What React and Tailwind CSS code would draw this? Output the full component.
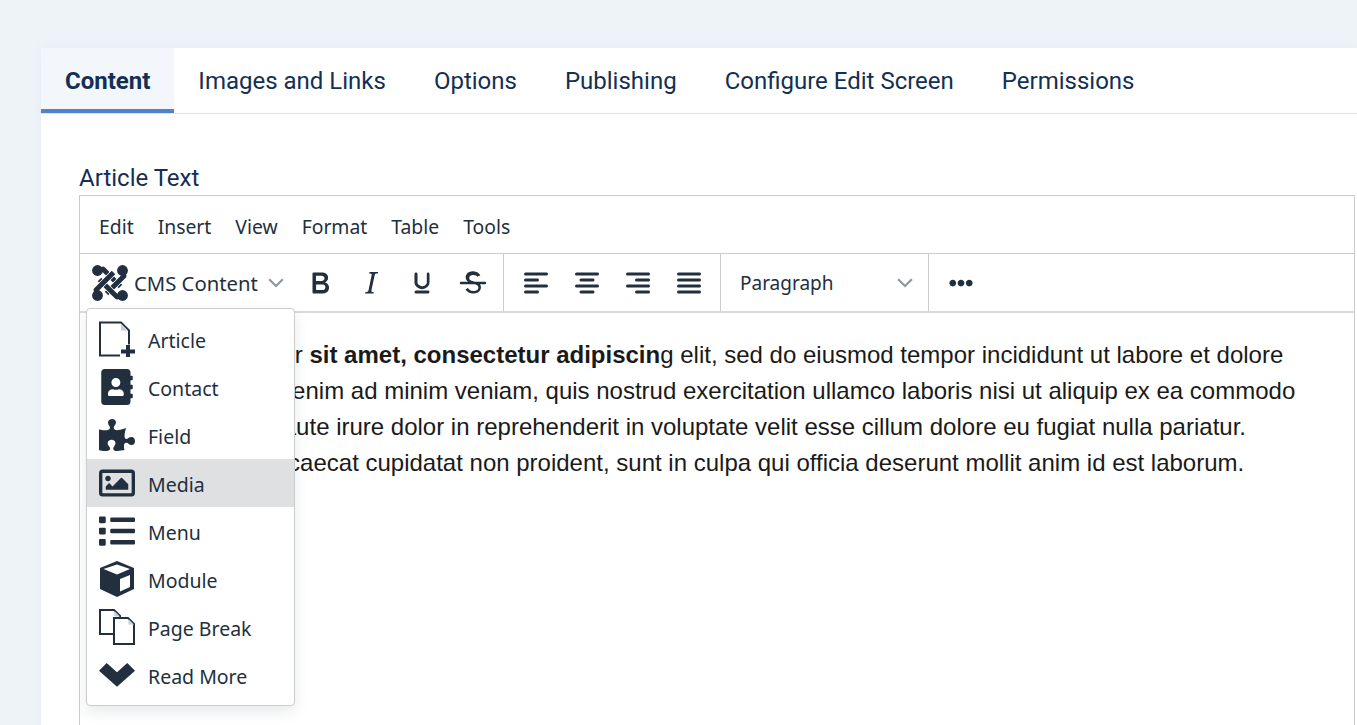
import React from "react";
import { FaAddressBook, FaPuzzlePiece, FaRegImage, FaList, FaEllipsisH } from "react-icons/fa";

const ui = { fontFamily: '"Noto Sans", sans-serif' };

function TI({ d }) {
  return (
    <svg viewBox="0 0 24 24" className="w-[36px] h-[36px] shrink-0" fill="#222f3e">
      <path d={d} />
    </svg>
  );
}

const paths = {
  bold: "M7.8 19c-.3 0-.5 0-.6-.2l-.2-.5V5.7c0-.2 0-.4.2-.5l.6-.2h5c1.5 0 2.7.3 3.5 1 .7.6 1.1 1.4 1.1 2.5a3 3 0 0 1-.6 1.9c-.4.6-1 1-1.6 1.2.4.1.9.3 1.3.6s.8.7 1 1.2c.4.4.5 1 .5 1.6 0 1.3-.4 2.3-1.3 3-.8.7-2.1 1-3.8 1H7.8zm5-8.3c.6 0 1.2-.1 1.6-.5.4-.3.6-.7.6-1.3 0-1.1-.8-1.7-2.3-1.7H9.3v3.5h3.5zm.5 6c.7 0 1.3-.1 1.7-.4.4-.4.6-.9.6-1.5s-.2-1-.7-1.4c-.4-.3-1-.4-2-.4H9.4v3.7h3.9z",
  italic: "m16.7 4.7-.1.9h-.3c-.6 0-1 0-1.4.3-.3.3-.4.6-.5 1.1l-2.1 9.8v.6c0 .5.4.8 1.4.8h.2l-.2.8H8l.2-.8h.2c1.1 0 1.8-.5 2-1.5l2-9.8.1-.5c0-.6-.4-.8-1.4-.8h-.3l.2-.9h5.8Z",
  underline: "M16 5c.6 0 1 .4 1 1v5.5a4 4 0 0 1-.4 1.8l-1 1.4a5.3 5.3 0 0 1-5.5 1 5 5 0 0 1-1.6-1c-.5-.4-.8-.9-1.1-1.4a4 4 0 0 1-.4-1.8V6c0-.6.4-1 1-1s1 .4 1 1v5.5c0 .3 0 .6.2 1l.6.7a3.3 3.3 0 0 0 5.2-.7c.2-.4.2-.7.2-1V6c0-.6.4-1 1-1ZM8 17h8c.6 0 1 .4 1 1s-.4 1-1 1H8a1 1 0 0 1 0-2Z",
  strike: "M15.6 8.5c-.5-.7-1-1.1-1.3-1.3-.6-.4-1.3-.6-2-.6-2.7 0-2.8 1.7-2.8 2.1 0 1.6 1.8 2 3.2 2.3 4.4.9 4.6 2.8 4.6 3.9 0 1.4-.7 4.1-5 4.1A6.2 6.2 0 0 1 7 16.4l1.5-1.1c.4.6 1.6 2 3.7 2 1.6 0 2.5-.4 3-1 .3-.4.4-.9.4-1.3 0-.8-.4-2-4-2.7-1-.2-2.2-.7-2.9-1.2-.7-.4-1.6-1.4-1.6-2.7 0-1.7 1.1-4.2 4.8-4.2 1.9 0 3.1.7 3.9 1.4.6.5 1 1 1.1 1.4l-1.8.5ZM4 11.2h16a.8.8 0 0 1 0 1.6H4a.8.8 0 0 1 0-1.6Z",
  left: "M5 5h14c.6 0 1 .4 1 1s-.4 1-1 1H5a1 1 0 1 1 0-2Zm0 4h8c.6 0 1 .4 1 1s-.4 1-1 1H5a1 1 0 1 1 0-2Zm0 8h8c.6 0 1 .4 1 1s-.4 1-1 1H5a1 1 0 0 1 0-2Zm0-4h14c.6 0 1 .4 1 1s-.4 1-1 1H5a1 1 0 0 1 0-2Z",
  center: "M5 5h14c.6 0 1 .4 1 1s-.4 1-1 1H5a1 1 0 1 1 0-2Zm3 4h8c.6 0 1 .4 1 1s-.4 1-1 1H8a1 1 0 1 1 0-2Zm0 8h8c.6 0 1 .4 1 1s-.4 1-1 1H8a1 1 0 0 1 0-2Zm-3-4h14c.6 0 1 .4 1 1s-.4 1-1 1H5a1 1 0 0 1 0-2Z",
  right: "M5 5h14c.6 0 1 .4 1 1s-.4 1-1 1H5a1 1 0 1 1 0-2Zm6 4h8c.6 0 1 .4 1 1s-.4 1-1 1h-8a1 1 0 0 1 0-2Zm0 8h8c.6 0 1 .4 1 1s-.4 1-1 1h-8a1 1 0 0 1 0-2Zm-6-4h14c.6 0 1 .4 1 1s-.4 1-1 1H5a1 1 0 0 1 0-2Z",
  justify: "M5 5h14c.6 0 1 .4 1 1s-.4 1-1 1H5a1 1 0 1 1 0-2Zm0 4h14c.6 0 1 .4 1 1s-.4 1-1 1H5a1 1 0 1 1 0-2Zm0 4h14c.6 0 1 .4 1 1s-.4 1-1 1H5a1 1 0 0 1 0-2Zm0 4h14c.6 0 1 .4 1 1s-.4 1-1 1H5a1 1 0 0 1 0-2Z",
};

function Chevron({ className }) {
  return (
    <svg viewBox="0 0 10 10" className={className} fill="none" stroke="#222f3e" strokeOpacity="0.5" strokeWidth="1.35">
      <path d="M0.7 2.6 5 6.9 9.3 2.6" />
    </svg>
  );
}

function JoomlaLogo() {
  const c = "#222f3e";
  const piece = (
    <>
      <path d="M13 6 26 19 30 23" fill="none" stroke="#fff" strokeWidth="6.600" />
      <path d="M7 7 12 5 26 19 29.500 22.500" fill="none" stroke={c} strokeWidth="5" strokeLinejoin="round" />
      <circle cx="6.500" cy="6.500" r="5.400" fill={c} />
    </>
  );
  return (
    <svg viewBox="0 0 38 38" className="w-[38px] h-[38px] shrink-0">
      <g>{piece}</g>
      <g transform="rotate(90 19 19)">{piece}</g>
      <g transform="rotate(180 19 19)">{piece}</g>
      <g transform="rotate(270 19 19)">{piece}</g>
    </svg>
  );
}

function ArticleIcon() {
  return (
    <svg viewBox="0 0 36 36" className="w-[36px] h-[36px] shrink-0" fill="none">
      <path d="M21 34.500H1V1.500h21l8 8v14" stroke="#222f3e" strokeWidth="2" />
      <path d="M22 2.500v7h7z" fill="#c9ced4" />
      <path d="M27 24h4v4.500h5v4h-5V36h-4v-3.500h-5v-4h5z" fill="#222f3e" />
    </svg>
  );
}

function PageBreakIcon() {
  return (
    <svg viewBox="0 0 36 36" className="w-[36px] h-[36px] shrink-0" fill="none" stroke="#222f3e" strokeWidth="2">
      <path d="M14 25H1V1h14l6 6v2" />
      <path d="M15.500 2v5.500H21z" fill="#c9ced4" stroke="none" />
      <path d="M15 35V9h14l6 6v20z" fill="#fff" />
      <path d="M29.500 10v5.500H35z" fill="#c9ced4" stroke="none" />
    </svg>
  );
}

function CubeIcon() {
  return (
    <svg viewBox="0 0 36 36" className="w-[36px] h-[36px] shrink-0">
      <path d="M18 0 35 7v21L18 36 1 28V7z" fill="#222f3e" />
      <path d="M4.500 8 18 3.500 31 8 18 13.500z" fill="#fff" />
      <path d="M21 18 31 14v12L21 30.500z" fill="#fff" />
    </svg>
  );
}

function ReadMoreIcon() {
  return (
    <svg viewBox="0 0 36 36" className="w-[36px] h-[36px] shrink-0">
      <path d="M0 13.700 7.700 6 18 15.300 28.300 6 36 13.700 18 29.700z" fill="#222f3e" />
    </svg>
  );
}

function FaIcon({ I, size = 36 }) {
  return (
    <span className="w-[36px] h-[36px] shrink-0 flex items-center justify-center">
      <I size={size} color="#222f3e" />
    </span>
  );
}

const items = [
  { label: "Article", icon: <ArticleIcon /> },
  { label: "Contact", icon: <FaIcon I={FaAddressBook} /> },
  { label: "Field", icon: <FaIcon I={FaPuzzlePiece} /> },
  { label: "Media", icon: <FaIcon I={FaRegImage} />, active: true },
  { label: "Menu", icon: <FaIcon I={FaList} /> },
  { label: "Module", icon: <CubeIcon /> },
  { label: "Page Break", icon: <PageBreakIcon /> },
  { label: "Read More", icon: <ReadMoreIcon /> },
];

const tabs = ["Images and Links", "Options", "Publishing", "Configure Edit Screen", "Permissions"];
const menus = ["Edit", "Insert", "View", "Format", "Table", "Tools"];

function Btn({ d }) {
  return (
    <span className="w-[51px] h-[36px] flex items-center justify-center">
      <TI d={d} />
    </span>
  );
}

export default function App() {
  return (
    <div className="h-[725px] w-[1357px] overflow-hidden bg-[#eef3f8] pt-[48px] pl-[41px]">
      <div className="h-[677px] bg-white shadow-[0_0_12px_rgba(60,90,140,0.05)]" style={{ fontFamily: "Roboto, sans-serif" }}>
        <div className="flex h-[66px] border-b border-[#dfe3e9] text-[24px] text-[#132f53]">
          <div className="h-[65px] px-6 pt-[4px] flex items-center bg-[#f3f6fa] border-b-4 border-[#5482c8] font-bold">Content</div>
          {tabs.map((t) => (
            <div key={t} className="h-[65px] px-6 flex items-center">{t}</div>
          ))}
        </div>
        <div className="pl-[38px] pr-[2px] pt-[46px]">
          <div className="h-[35px] text-[24px] leading-[36px] text-[#132f53]">Article Text</div>
          <div className="relative h-[600px] border border-[#cccccc] text-[#222f3e]" style={ui}>
            <div className="flex items-center h-[58px] pt-[4px] border-b border-[#cccccc] pl-[19px] gap-[24px] text-[19.35px]">
              {menus.map((m) => (
                <span key={m}>{m}</span>
              ))}
            </div>
            <div className="flex items-center h-[59px] border-b-2 border-[#d9d9d9]">
              <div className="flex items-center h-full w-[424px] shrink-0 border-r border-[#cccccc]">
                <div className="w-[214px] flex items-center shrink-0 pl-[11px]">
                  <JoomlaLogo />
                  <span className="ml-[5px] pt-[2px] text-[20.3px] whitespace-nowrap">CMS Content</span>
                  <Chevron className="ml-[10px] w-[16px] h-[16px]" />
                </div>
                <Btn d={paths.bold} />
                <Btn d={paths.italic} />
                <Btn d={paths.underline} />
                <Btn d={paths.strike} />
              </div>
              <div className="flex items-center h-full pl-[6px] w-[217px] shrink-0 border-r border-[#cccccc]">
                <Btn d={paths.left} />
                <Btn d={paths.center} />
                <Btn d={paths.right} />
                <Btn d={paths.justify} />
              </div>
              <div className="flex items-center h-full w-[208px] shrink-0 pl-[19px] border-r border-[#cccccc] text-[19px]">
                <span className="pt-[2px]">Paragraph</span>
                <Chevron className="ml-auto mr-[15px] w-[16px] h-[16px]" />
              </div>
              <span className="ml-[20px] flex items-center">
                <FaEllipsisH size={24} color="#222f3e" />
              </span>
            </div>
            <div className="pl-[24px] pt-[24px] text-[24px] leading-[36px] text-[#1a1a1a] pr-[40px]" style={{ fontFamily: '"Liberation Sans", sans-serif' }}>
              <p>
                Lorem ipsum dolor <b>sit amet, consectetur adipiscin</b>g elit, sed do eiusmod tempor incididunt ut labore et dolore
                magna aliqua. Ut enim ad minim veniam, quis nostrud exercitation ullamco laboris nisi ut aliquip ex ea commodo
                consequat. Duis aute irure dolor in reprehenderit in voluptate velit esse cillum dolore eu fugiat nulla pariatur.
                Excepteur sint occaecat cupidatat non proident, sunt in culpa qui officia deserunt mollit anim id est laborum.
              </p>
            </div>
            <div className="absolute left-[6px] top-[112px] w-[209px] bg-white border border-[#cccccc] rounded-[4px] py-[6px] shadow-[0_6px_14px_rgba(34,47,62,0.1)]">
              {items.map((it) => (
                <div key={it.label} className={"flex items-center h-[48px] pl-[12px] gap-[12px] text-[19.5px] " + (it.active ? "bg-[#dee0e2]" : "")}>
                  {it.icon}
                  <span className="whitespace-nowrap pt-[4px] pl-[1px]">{it.label}</span>
                </div>
              ))}
            </div>
          </div>
        </div>
      </div>
    </div>
  );
}
